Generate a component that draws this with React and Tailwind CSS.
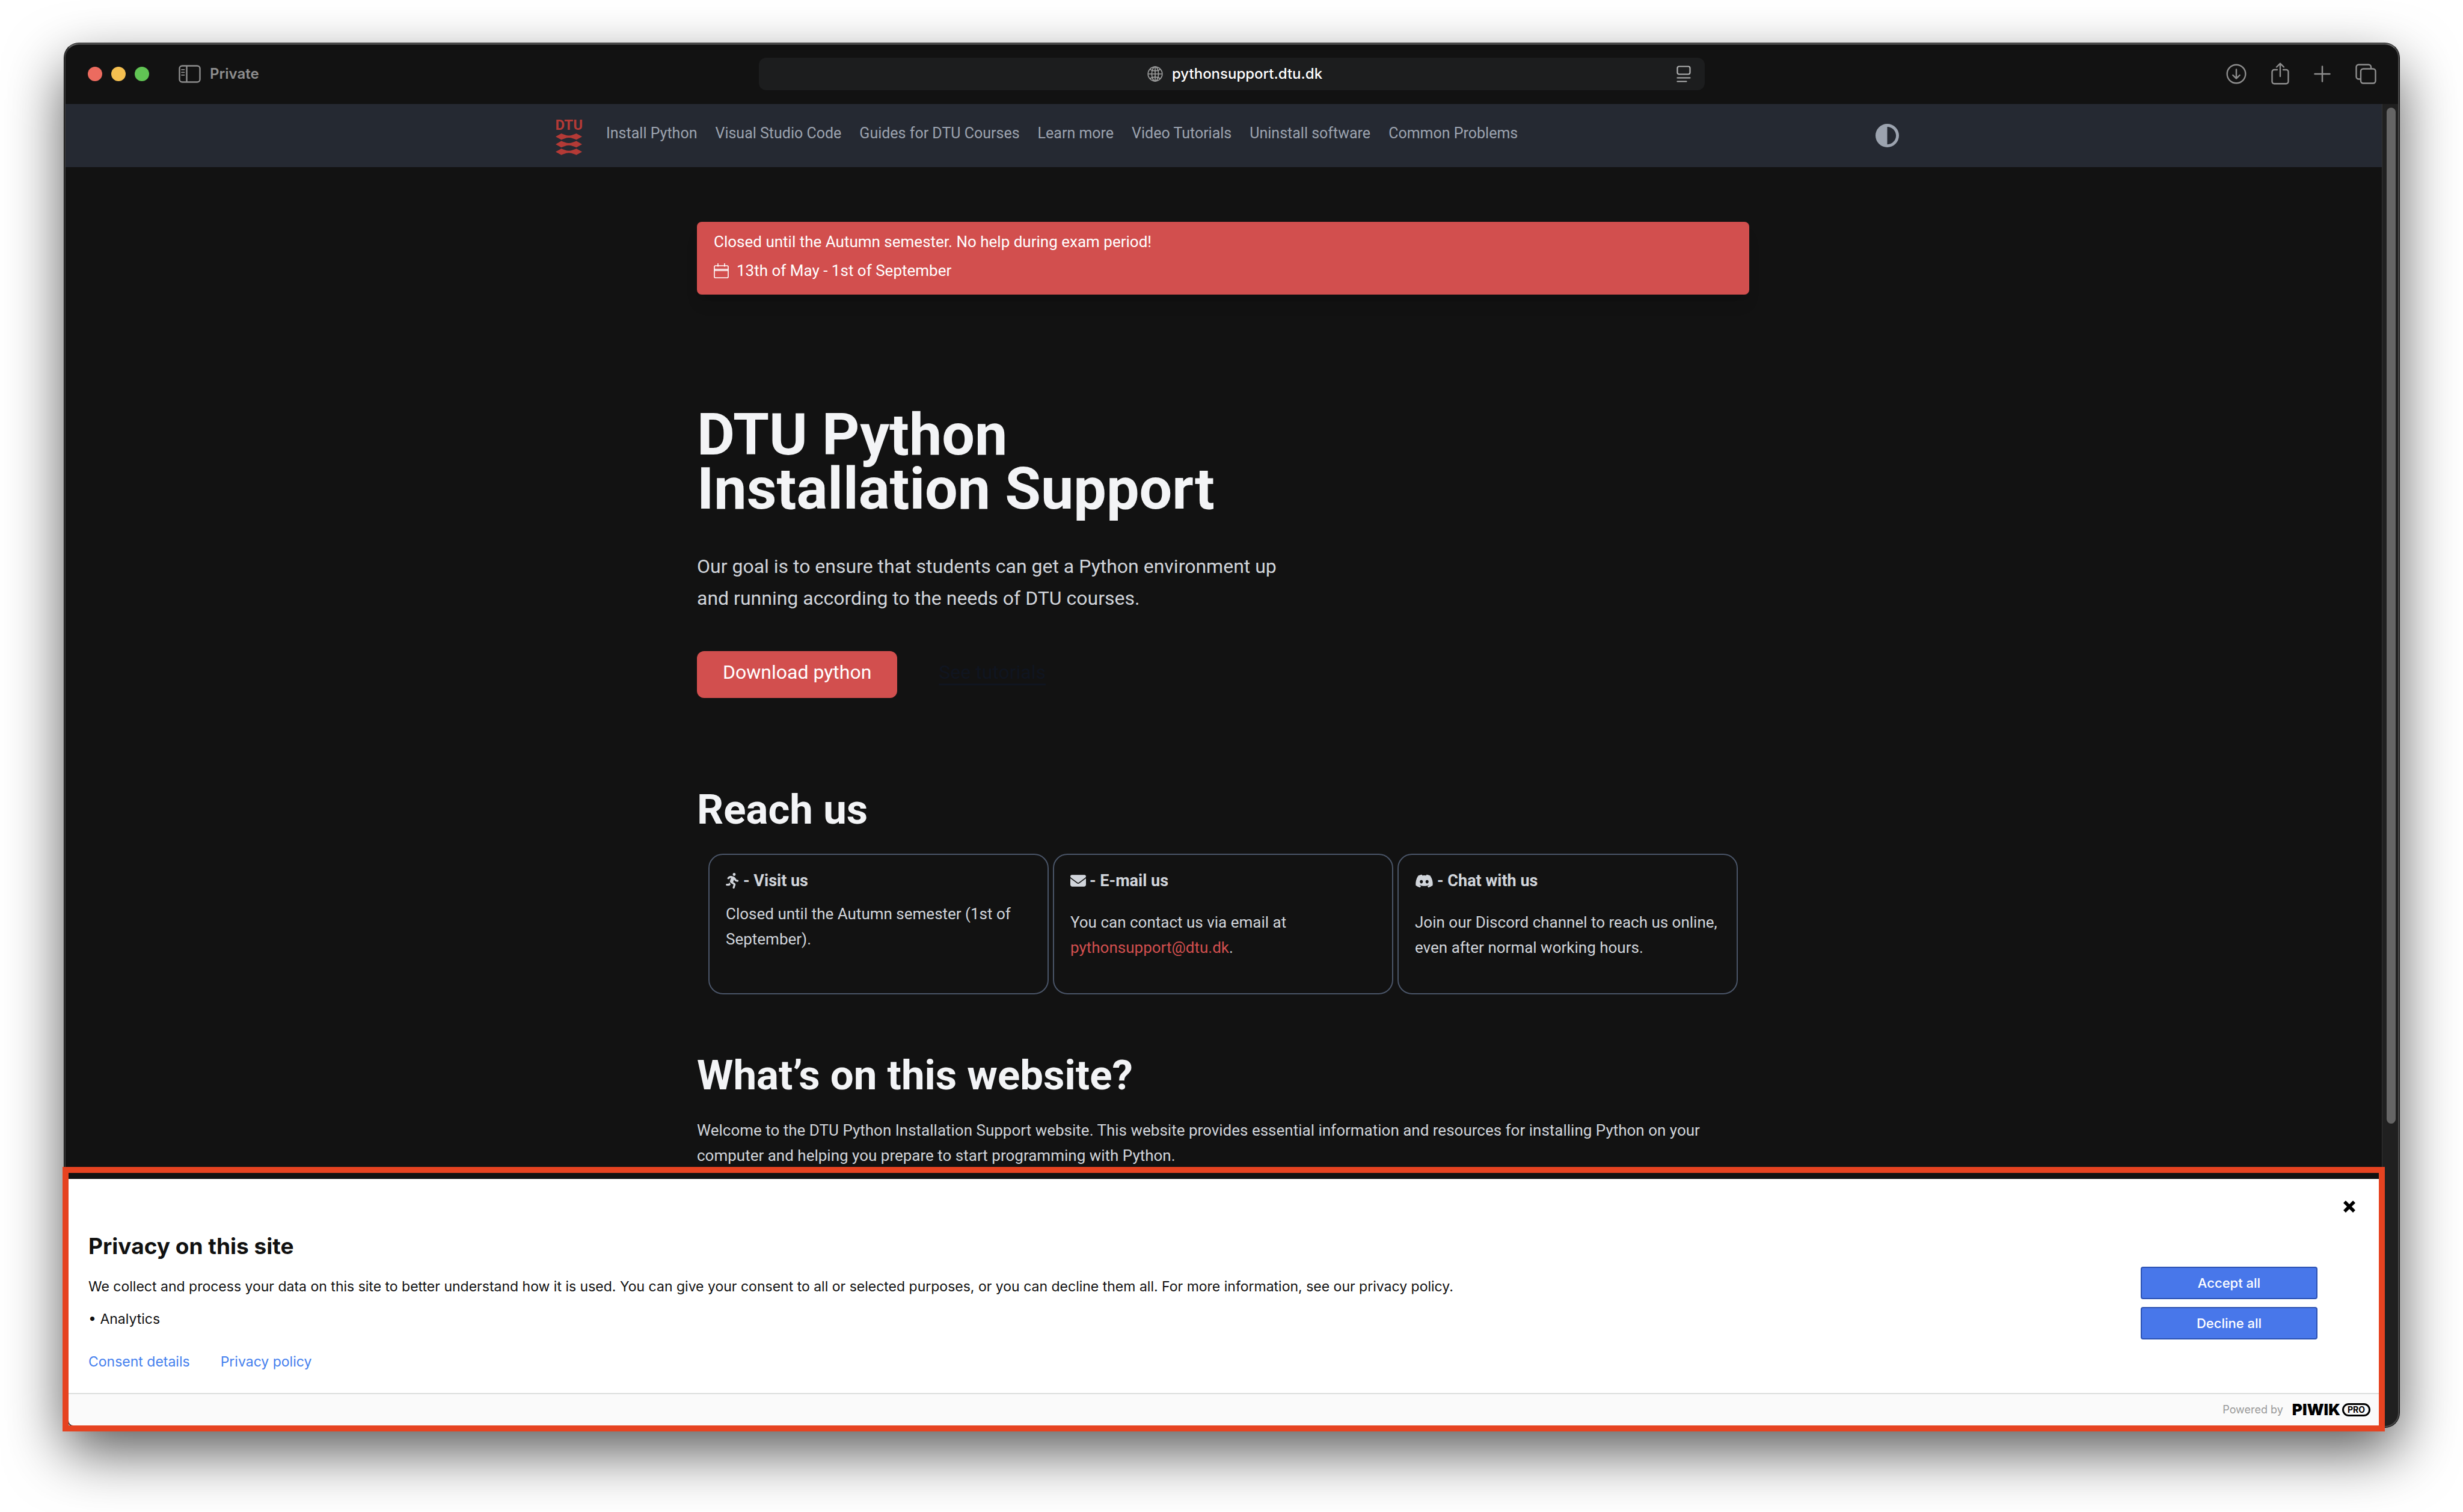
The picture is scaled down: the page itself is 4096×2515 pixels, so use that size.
import React from "react";
import { FaPersonRunning, FaEnvelope, FaDiscord, FaCircleHalfStroke } from "react-icons/fa6";

const NAV_LINKS = [
  "Install Python",
  "Visual Studio Code",
  "Guides for DTU Courses",
  "Learn more",
  "Video Tutorials",
  "Uninstall software",
  "Common Problems",
];

function SidebarIcon() {
  return (
    <svg viewBox="0 0 37 30" className="h-[30px] w-[37px]" fill="none" stroke="currentColor" strokeWidth="2.4">
      <rect x="1.5" y="1.5" width="34" height="27" rx="4.5" />
      <path d="M13.5 1.5v27" />
      <path d="M5 7.8h4.5M5 12.3h4.5M5 16.8h4.5" strokeWidth="1.8" strokeLinecap="round" />
    </svg>
  );
}

function GlobeIcon() {
  return (
    <svg viewBox="0 0 26 26" className="size-[26px]" fill="none" stroke="currentColor" strokeWidth="1.7">
      <circle cx="13" cy="13" r="11.8" />
      <ellipse cx="13" cy="13" rx="5.6" ry="11.8" />
      <path d="M13 1.2v23.6M1.2 13h23.6" />
      <path d="M4.2 5.2c2.4 1.8 5.4 2.7 8.8 2.7s6.4-.9 8.8-2.7M4.2 20.8c2.4-1.8 5.4-2.7 8.8-2.7s6.4.9 8.8 2.7" />
    </svg>
  );
}

function ReaderIcon() {
  return (
    <svg viewBox="0 0 24 28" className="h-[28px] w-[24px]" fill="none" stroke="currentColor" strokeWidth="2.2" strokeLinecap="round">
      <rect x="1.5" y="1.5" width="21" height="13" rx="3" />
      <path d="M1.5 20.5h21M1.5 26.5h15" />
    </svg>
  );
}

function DownloadIcon() {
  return (
    <svg viewBox="0 0 34 34" className="size-[34px]" fill="none" stroke="currentColor" strokeWidth="2.4" strokeLinecap="round" strokeLinejoin="round">
      <circle cx="17" cy="17" r="15.3" />
      <path d="M17 9.5v15M11.3 19l5.7 5.7 5.7-5.7" />
    </svg>
  );
}

function ShareIcon() {
  return (
    <svg viewBox="0 0 30 37" className="h-[37px] w-[30px]" fill="none" stroke="currentColor" strokeWidth="2.4" strokeLinecap="round" strokeLinejoin="round">
      <path d="M10 12H5a3.500 3.500 0 0 0-3.500 3.500v16.200A3.500 3.500 0 0 0 5 35.200h20a3.500 3.500 0 0 0 3.500-3.500V15.500A3.500 3.500 0 0 0 25 12h-5" />
      <path d="M15 23V2M9 7.500 15 1.500l6 6" />
    </svg>
  );
}

function PlusIcon() {
  return (
    <svg viewBox="0 0 28 28" className="size-[28px]" stroke="currentColor" strokeWidth="2.5" strokeLinecap="round">
      <path d="M14 1.500v25M1.500 14h25" />
    </svg>
  );
}

function TabsIcon() {
  return (
    <svg viewBox="0 0 35 34" className="h-[34px] w-[35px]" fill="none" stroke="currentColor" strokeWidth="2.4" strokeLinejoin="round">
      <rect x="9" y="8.5" width="24.5" height="24" rx="4" />
      <path d="M9 25.500H5.500a4 4 0 0 1-4-4v-16a4 4 0 0 1 4-4h16.500a4 4 0 0 1 4 4v3" />
    </svg>
  );
}

function CalendarIcon() {
  return (
    <svg viewBox="0 0 25 25" className="size-[25px]" fill="none" stroke="currentColor" strokeWidth="1.6" strokeLinejoin="round">
      <rect x="1" y="4" width="23" height="20" rx="1.8" />
      <path d="M1 10h23M1 12h23M7 0v5.500M18 0v5.500" />
    </svg>
  );
}

function WaveMark() {
  const wave = "M0 5.300 9.500 0C14 1.600 17 3.500 22 3.500S30 1.600 34.500 0L44 5.300 34.500 10.600C30 9 27 7.100 22 7.100S14 9 9.500 10.600Z";
  return (
    <svg viewBox="0 0 44 36" className="h-[36px] w-[44px]" fill="currentColor">
      <path d={wave} />
      <path d={wave} transform="translate(0 12.6)" />
      <path d={wave} transform="translate(0 25.2)" />
    </svg>
  );
}

function CloseIcon() {
  return (
    <svg viewBox="0 0 20 20" className="size-[20px]" stroke="currentColor" strokeWidth="5.5">
      <path d="M2 2l16 16M18 2 2 18" />
    </svg>
  );
}

function TitleBar() {
  return (
    <header className="grid h-[101px] shrink-0 grid-cols-[1fr_1573px_1fr] items-center bg-[#121212] font-['Inter',sans-serif] text-[#8e8e8e]">
      <div className="flex items-center pl-[39px]">
        <div className="flex gap-[15px]">
          <span className="size-[24px] rounded-full bg-[#ec6b5f]" />
          <span className="size-[24px] rounded-full bg-[#f4bf50]" />
          <span className="size-[24px] rounded-full bg-[#61c454]" />
        </div>
        <button type="button" className="ml-[49px] flex items-center gap-[15px]">
          <SidebarIcon />
          <span className="text-[24px] font-semibold leading-[30px]">Private</span>
        </button>
      </div>
      <div className="relative flex h-[54px] items-center justify-center gap-[15px] rounded-[12px] bg-[#1c1d1e] pl-[10px] text-[#9a9b9b]">
        <GlobeIcon />
        <span className="text-[24px] font-medium leading-[30px] text-white">pythonsupport.dtu.dk</span>
        <button type="button" aria-label="Reader" className="absolute right-[23px] text-[#b0b1b1]">
          <ReaderIcon />
        </button>
      </div>
      <div className="flex items-center justify-end gap-[41px] pr-[38px]">
        <button type="button" aria-label="Downloads"><DownloadIcon /></button>
        <button type="button" aria-label="Share"><ShareIcon /></button>
        <button type="button" aria-label="New tab"><PlusIcon /></button>
        <button type="button" aria-label="Tab overview"><TabsIcon /></button>
      </div>
    </header>
  );
}

function SiteNav() {
  return (
    <nav className="h-[105px] bg-[#252932] pl-[13px] text-[#9ca3af]">
      <div className="mx-auto flex h-full w-full max-w-[2234px] items-center">
        <a href="#home" className="flex flex-col items-center text-[#b43a36]">
          <span className="text-[24px] font-bold leading-[28px]">DTU</span>
          <WaveMark />
        </a>
        <ul className="flex gap-[30px] pb-[7px] pl-[39px] text-[25px] leading-[40px]">
          {NAV_LINKS.map((label) => (
            <li key={label}>
              <a href="#nav">{label}</a>
            </li>
          ))}
        </ul>
        <button type="button" aria-label="Toggle theme" className="ml-auto">
          <FaCircleHalfStroke className="size-[39px]" />
        </button>
      </div>
    </nav>
  );
}

function Card({ icon, title, roomy, children }) {
  return (
    <article className="h-[234px] rounded-[24px] border-2 border-[#4a5568] px-[27px] pt-[22px] text-[#d1d5db]">
      <h3 className="flex items-center gap-[6px] text-[27px] font-bold leading-[42px]">
        {icon}
        <span>{title}</span>
      </h3>
      <p className={roomy ? "mt-[27px] text-[26px] leading-[42px]" : "mt-[13px] text-[26px] leading-[42px]"}>{children}</p>
    </article>
  );
}

function Page() {
  return (
    <main className="mx-auto w-full max-w-[1750px] pt-[91px]">
      <section className="rounded-[8px] bg-[#d24f4e] px-[28px] pb-[16px] pt-[9px] text-[26px] leading-[48px] text-white shadow-xl">
        <p>Closed until the Autumn semester. No help during exam period!</p>
        <p className="flex items-center gap-[13px]">
          <CalendarIcon />
          <span>13th of May - 1st of September</span>
        </p>
      </section>

      <section className="pt-[188px]">
        <h1 className="text-[97px] font-bold leading-[90px] text-[#f3f4f6]">
          DTU Python
          <br />
          Installation Support
        </h1>
        <p className="mt-[58px] max-w-[1000px] text-[32px] leading-[53px] text-[#d1d5db]">
          Our goal is to ensure that students can get a Python environment up and running according to the needs of DTU courses.
        </p>
        <div className="mt-[61px] flex items-center text-[32px] leading-[40px]">
          <a href="#download" className="rounded-[12px] bg-[#d24f4e] px-[43px] pb-[23px] pt-[15px] text-white">
            Download python
          </a>
          <a href="#tutorials" className="ml-[69px] pb-[8px] text-[#101520] underline underline-offset-[8px]">
            See tutorials
          </a>
        </div>
      </section>

      <section className="pt-[146px]">
        <h2 className="text-[69px] font-bold leading-[80px] text-[#f3f4f6]">Reach us</h2>
        <div className="mt-[33px] grid grid-cols-3 gap-[7px] px-[19px]">
          <Card icon={<FaPersonRunning className="h-[26px] w-[23px]" />} title="- Visit us">
            Closed until the Autumn semester (1st of September).
          </Card>
          <Card roomy icon={<FaEnvelope className="size-[26px]" />} title="- E-mail us">
            You can contact us via email at{" "}
            <a href="mailto:pythonsupport@dtu.dk" className="text-[#d24f4e]">pythonsupport@dtu.dk</a>.
          </Card>
          <Card roomy icon={<FaDiscord className="size-[31px]" />} title="- Chat with us">
            Join our Discord channel to reach us online, even after normal working hours.
          </Card>
        </div>
      </section>

      <section className="pt-[95px]">
        <h2 className="text-[69px] font-bold leading-[80px] text-[#f3f4f6]">What’s on this website?</h2>
        <p className="mt-[30px] text-[26px] leading-[42px] text-[#d1d5db]">
          Welcome to the DTU Python Installation Support website. This website provides essential information and resources for installing Python on your computer and helping you prepare to start programming with Python.
        </p>
      </section>
    </main>
  );
}

function ConsentBanner() {
  return (
    <aside className="absolute -bottom-[7px] -left-[3px] right-[24px] border-[10px] border-[#e64321] pt-[10px] font-['Inter',sans-serif]">
      <div className="relative flex items-start justify-between bg-white pb-[35px] pl-[33px] pr-[102px] pt-[88px] text-[23px] leading-[34px] text-[#111]">
        <div>
          <h2 className="text-[37px] font-bold leading-[48px]">Privacy on this site</h2>
          <p className="mt-[26px]">
            We collect and process your data on this site to better understand how it is used. You can give your consent to all or selected purposes, or you can decline them all. For more information, see our privacy policy.
          </p>
          <ul className="mt-[20px]">
            <li>• Analytics</li>
          </ul>
          <div className="mt-[37px] flex gap-[51px] text-[#4580ee]">
            <a href="#consent">Consent details</a>
            <a href="#privacy">Privacy policy</a>
          </div>
        </div>
        <div className="flex w-[294px] shrink-0 flex-col gap-[13px] pt-[58px] text-[22px] font-medium leading-[50px] text-white">
          <button type="button" className="rounded-[4px] border-2 border-[#2c52b3] bg-[#4877ea]">Accept all</button>
          <button type="button" className="rounded-[4px] border-2 border-[#2c52b3] bg-[#4877ea]">Decline all</button>
        </div>
        <button type="button" aria-label="Close" className="absolute right-[39px] top-[36px] text-black">
          <CloseIcon />
        </button>
      </div>
      <footer className="flex h-[54px] items-center justify-end rounded-bl-[8px] border-t-2 border-[#dcdedd] bg-[#fafafa] pr-[14px]">
        <span className="text-[18px] leading-[24px] text-[#999]">Powered by</span>
        <a href="#piwik" className="ml-[15px] flex items-center gap-[3px] text-black">
          <span className="text-[26px] font-black leading-[28px]">PIWIK</span>
          <span className="rounded-full border-[3px] border-black px-[6px] text-[14px] font-bold leading-[16px]">PRO</span>
        </a>
      </footer>
    </aside>
  );
}

export default function App() {
  return (
    <div className="flex h-screen flex-col bg-white pb-[141px] pl-[107px] pr-[106px] pt-[72px] font-['Roboto',sans-serif]">
      <div className="relative min-h-0 flex-1 rounded-[24px] shadow-[0_0_0_1px_#000,0_40px_96px_rgba(0,0,0,0.66)]">
        <div className="flex h-full flex-col overflow-hidden rounded-[24px] bg-[#121212]">
          <TitleBar />
          <div className="flex min-h-0 flex-1">
            <div className="min-w-0 flex-1 overflow-hidden">
              <SiteNav />
              <Page />
            </div>
            <div className="flex w-[29px] shrink-0 justify-center border-l border-[#333] bg-[#202020] pt-[6px]">
              <div className="h-[77%] w-[15px] rounded-full bg-[#656565]" />
            </div>
          </div>
        </div>
        <div className="pointer-events-none absolute inset-0 rounded-[24px] border-2 border-[#484848] border-t-[#666] border-l-[#3a3a3a]" />
        <ConsentBanner />
      </div>
    </div>
  );
}
